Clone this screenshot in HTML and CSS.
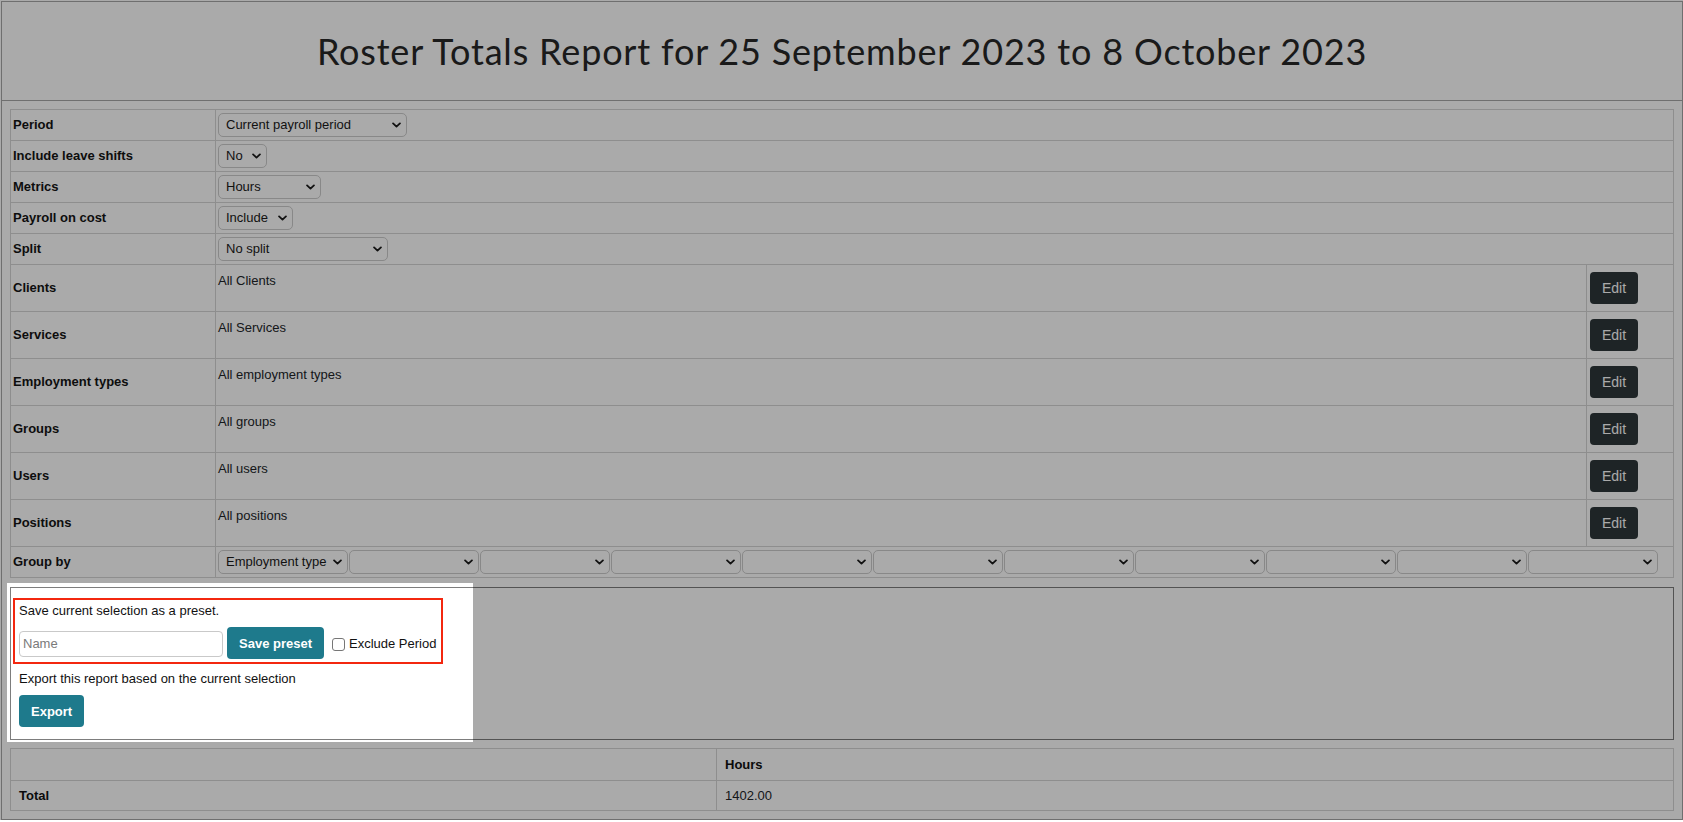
FILE: index.html
```html
<!DOCTYPE html>
<html lang="en">
<head>
<meta charset="utf-8">
<title>Roster Totals Report</title>
<link rel="stylesheet" href="styles.css">
</head>
<body>
<div class="page">
  <header class="page-head">
    <h1 class="title">Roster Totals Report for 25 September 2023 to 8 October 2023</h1>
  </header>

  <table class="filters">
    <colgroup><col class="c-label"><col><col class="c-edit"></colgroup>
    <tbody>
      <tr>
        <th>Period</th>
        <td colspan="2" class="sel-cell"><div class="sel w-period"><span>Current payroll period</span><svg class="chev" viewBox="0 0 10 6"><path d="M1.2 1.2 5 4.8 8.8 1.2"/></svg></div></td>
      </tr>
      <tr>
        <th>Include leave shifts</th>
        <td colspan="2" class="sel-cell"><div class="sel w-no"><span>No</span><svg class="chev" viewBox="0 0 10 6"><path d="M1.2 1.2 5 4.8 8.8 1.2"/></svg></div></td>
      </tr>
      <tr>
        <th>Metrics</th>
        <td colspan="2" class="sel-cell"><div class="sel w-hours"><span>Hours</span><svg class="chev" viewBox="0 0 10 6"><path d="M1.2 1.2 5 4.8 8.8 1.2"/></svg></div></td>
      </tr>
      <tr>
        <th>Payroll on cost</th>
        <td colspan="2" class="sel-cell"><div class="sel w-include"><span>Include</span><svg class="chev" viewBox="0 0 10 6"><path d="M1.2 1.2 5 4.8 8.8 1.2"/></svg></div></td>
      </tr>
      <tr>
        <th>Split</th>
        <td colspan="2" class="sel-cell"><div class="sel w-split"><span>No split</span><svg class="chev" viewBox="0 0 10 6"><path d="M1.2 1.2 5 4.8 8.8 1.2"/></svg></div></td>
      </tr>
      <tr class="pick">
        <th>Clients</th>
        <td class="val"><div class="val-text">All Clients</div></td>
        <td class="edit-cell"><button class="btn-edit">Edit</button></td>
      </tr>
      <tr class="pick">
        <th>Services</th>
        <td class="val"><div class="val-text">All Services</div></td>
        <td class="edit-cell"><button class="btn-edit">Edit</button></td>
      </tr>
      <tr class="pick">
        <th>Employment types</th>
        <td class="val"><div class="val-text">All employment types</div></td>
        <td class="edit-cell"><button class="btn-edit">Edit</button></td>
      </tr>
      <tr class="pick">
        <th>Groups</th>
        <td class="val"><div class="val-text">All groups</div></td>
        <td class="edit-cell"><button class="btn-edit">Edit</button></td>
      </tr>
      <tr class="pick">
        <th>Users</th>
        <td class="val"><div class="val-text">All users</div></td>
        <td class="edit-cell"><button class="btn-edit">Edit</button></td>
      </tr>
      <tr class="pick">
        <th>Positions</th>
        <td class="val"><div class="val-text">All positions</div></td>
        <td class="edit-cell"><button class="btn-edit">Edit</button></td>
      </tr>
      <tr>
        <th>Group by</th>
        <td colspan="2" class="sel-cell">
          <div class="group-row">
            <div class="sel w-group"><span>Employment type</span><svg class="chev" viewBox="0 0 10 6"><path d="M1.2 1.2 5 4.8 8.8 1.2"/></svg></div>
            <div class="sel w-group"><span></span><svg class="chev" viewBox="0 0 10 6"><path d="M1.2 1.2 5 4.8 8.8 1.2"/></svg></div>
            <div class="sel w-group"><span></span><svg class="chev" viewBox="0 0 10 6"><path d="M1.2 1.2 5 4.8 8.8 1.2"/></svg></div>
            <div class="sel w-group"><span></span><svg class="chev" viewBox="0 0 10 6"><path d="M1.2 1.2 5 4.8 8.8 1.2"/></svg></div>
            <div class="sel w-group"><span></span><svg class="chev" viewBox="0 0 10 6"><path d="M1.2 1.2 5 4.8 8.8 1.2"/></svg></div>
            <div class="sel w-group"><span></span><svg class="chev" viewBox="0 0 10 6"><path d="M1.2 1.2 5 4.8 8.8 1.2"/></svg></div>
            <div class="sel w-group"><span></span><svg class="chev" viewBox="0 0 10 6"><path d="M1.2 1.2 5 4.8 8.8 1.2"/></svg></div>
            <div class="sel w-group"><span></span><svg class="chev" viewBox="0 0 10 6"><path d="M1.2 1.2 5 4.8 8.8 1.2"/></svg></div>
            <div class="sel w-group"><span></span><svg class="chev" viewBox="0 0 10 6"><path d="M1.2 1.2 5 4.8 8.8 1.2"/></svg></div>
            <div class="sel w-group"><span></span><svg class="chev" viewBox="0 0 10 6"><path d="M1.2 1.2 5 4.8 8.8 1.2"/></svg></div>
            <div class="sel w-group"><span></span><svg class="chev" viewBox="0 0 10 6"><path d="M1.2 1.2 5 4.8 8.8 1.2"/></svg></div>
          </div>
        </td>
      </tr>
    </tbody>
  </table>

  <section class="panel">
    <div class="spotlight"></div>
    <div class="preset">
      <p class="note">Save current selection as a preset.</p>
      <div class="preset-row">
        <input class="name-input" type="text" placeholder="Name">
        <button class="btn-teal">Save preset</button>
        <label class="check"><span class="check-box"></span>Exclude Period</label>
      </div>
    </div>
    <p class="note export-note">Export this report based on the current selection</p>
    <button class="btn-teal btn-export">Export</button>
  </section>

  <table class="totals">
    <colgroup><col class="c-first"><col></colgroup>
    <thead>
      <tr class="head-row"><th></th><th>Hours</th></tr>
    </thead>
    <tbody>
      <tr class="total-row"><th>Total</th><td>1402.00</td></tr>
    </tbody>
  </table>
</div>
</body>
</html>
```

FILE: styles.css
```css
html, body {
  margin: 0;
  padding: 0;
  background: #ffffff;
  overflow: hidden;
}

body {
  font-family: "Liberation Sans", Arial, sans-serif;
  font-size: 13px;
  color: #212529;
}

.page {
  margin: 1px 0 0 1px;
  width: 1682px;
  box-sizing: border-box;
  border: 1px solid #a7a7a7;
  padding: 0 8px 8px 8px;
}

.page-head {
  height: 98px;
  margin: 0 -8px;
  border-bottom: 1px solid #a7a7a7;
  display: flex;
  align-items: center;
  justify-content: center;
}

.title {
  margin: 0;
  font-family: Lato, "Open Sans", sans-serif;
  font-weight: 400;
  font-size: 36px;
  letter-spacing: 0.82px;
  color: #282828;
}

/* ---------- filters table ---------- */
.filters {
  width: 100%;
  margin-top: 8px;
  border-collapse: collapse;
  table-layout: fixed;
}

.c-label { width: 205px; }
.c-edit { width: 87px; }

.filters tr { height: 31px; }
.filters tr.pick { height: 47px; }

.filters th,
.filters td {
  border: 1px solid #d6d6d6;
  padding: 3px 2px;
  line-height: 16px;
}

.filters th {
  text-align: left;
  vertical-align: middle;
  font-size: 13px;
  font-weight: 700;
  color: #141414;
}

.filters td.val {
  vertical-align: top;
}

.val-text {
  padding-top: 5px;
}

.edit-cell {
  vertical-align: top;
}

.btn-edit {
  display: block;
  margin: 4px 0 4px 1px;
  height: 32px;
  padding: 0 12px;
  border: none;
  border-radius: 4px;
  background: #2e373a;
  color: #ffffff;
  font-family: "Liberation Sans", Arial, sans-serif;
  font-size: 14px;
}

/* fake selects */
.sel {
  display: flex;
  align-items: center;
  justify-content: space-between;
  height: 24px;
  box-sizing: border-box;
  border: 1px solid #cdcdcd;
  border-radius: 5px;
  padding: 0 5px 0 7px;
  font-size: 13px;
  color: #1a1a1a;
  background: #ffffff;
  white-space: nowrap;
}

.chev {
  width: 9px;
  height: 6px;
  flex: none;
}

.chev path {
  fill: none;
  stroke: #1a1a1a;
  stroke-width: 2;
  stroke-linecap: round;
  stroke-linejoin: round;
}

.w-period { width: 189px; }
.w-no { width: 49px; }
.w-hours { width: 103px; }
.w-include { width: 75px; }
.w-split { width: 170px; }
.w-group { width: 130px; }

.group-row {
  display: flex;
  gap: 1px;
}

/* ---------- preset / export panel ---------- */
.panel {
  position: relative;
  margin-top: 9px;
  border: 1px solid #7d7d7d;
  padding: 10px 8px 12px 8px;
}

.spotlight {
  position: absolute;
  left: -4px;
  top: -5px;
  width: 466px;
  height: 159px;
  box-shadow: 0 0 0 4000px rgba(0, 0, 0, 0.333);
  pointer-events: none;
  z-index: 5;
}

.preset {
  width: 430px;
  box-sizing: border-box;
  margin-left: -6px;
  border: 2px solid #f3270f;
  padding: 3px 4px;
}

.note {
  margin: 0;
  line-height: 16px;
  font-size: 13px;
  color: #111111;
}

.preset-row {
  display: flex;
  align-items: center;
  height: 32px;
  margin-top: 8px;
}

.name-input {
  width: 204px;
  height: 26px;
  box-sizing: border-box;
  margin: 1px 0 0 0;
  border: 1px solid #c9c9c9;
  border-radius: 4px;
  padding: 0 3px;
  font-family: "Liberation Sans", Arial, sans-serif;
  font-size: 13px;
  color: #111111;
  background: #ffffff;
}

.name-input::placeholder {
  color: #7a7a7a;
}

.btn-teal {
  height: 32px;
  padding: 0 12px;
  border: none;
  border-radius: 4px;
  background: #1e7a8c;
  color: #ffffff;
  font-family: "Liberation Sans", Arial, sans-serif;
  font-size: 13px;
  font-weight: 700;
}

.preset-row .btn-teal {
  margin-left: 4px;
}

.check {
  display: flex;
  align-items: center;
  margin-left: 8px;
  font-size: 13px;
  color: #111111;
}

.check-box {
  width: 13px;
  height: 13px;
  box-sizing: border-box;
  margin: 2px 4px 0 0;
  border: 1px solid #767676;
  border-radius: 3px;
  background: #ffffff;
}

.export-note {
  margin-top: 7px;
}

.btn-export {
  display: block;
  margin-top: 8px;
}

/* ---------- totals ---------- */
.totals {
  width: 100%;
  margin-top: 8px;
  border-collapse: collapse;
  table-layout: fixed;
}

.c-first { width: 706px; }

.totals .head-row { height: 32px; }
.totals .total-row { height: 30px; }

.totals th,
.totals td {
  border: 1px solid #d6d6d6;
  padding: 0 8px;
  line-height: 15px;
  text-align: left;
  vertical-align: middle;
  font-size: 13px;
}

.totals th {
  font-weight: 700;
  color: #111111;
}
```
